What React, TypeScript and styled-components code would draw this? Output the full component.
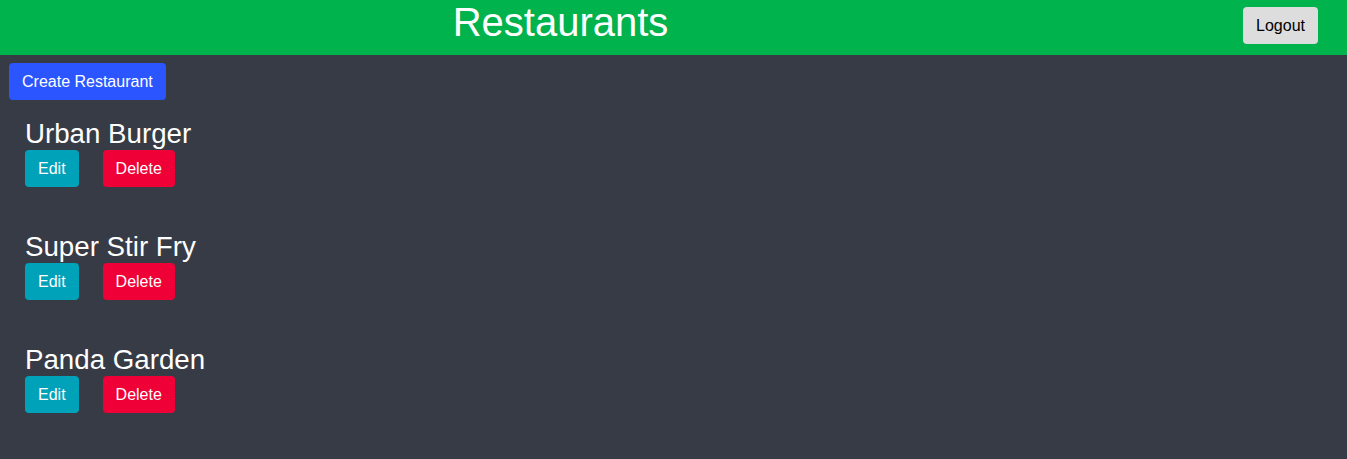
import React from "react";
import styled, { createGlobalStyle } from "styled-components";

const GlobalStyle = createGlobalStyle`
  html, body {
    margin: 0;
    padding: 0;
    background: #373b45;
    font-family: "Liberation Sans", Arial, sans-serif;
  }
  #root {
    min-height: 100vh;
  }
`;

const Page = styled.div`
  min-height: 100vh;
  background: #373b45;
  color: #ffffff;
`;

const Header = styled.header`
  display: flex;
  align-items: flex-start;
  height: 55px;
  background: #00b34c;
`;

const Title = styled.h1`
  flex: 1;
  margin: 0 122px 0 0;
  font-size: 40px;
  line-height: normal;
  font-weight: 400;
  text-align: center;
  color: #ffffff;
`;

const Button = styled.button<{ $bg: string; $fg?: string }>`
  height: 37px;
  padding: 0 13px;
  border: none;
  border-radius: 4px;
  background: ${(p) => p.$bg};
  color: ${(p) => p.$fg ?? "#ffffff"};
  font-family: "Liberation Sans", Arial, sans-serif;
  font-size: 16px;
  line-height: 18px;
  cursor: pointer;
`;

const LogoutButton = styled(Button)`
  margin: 7px 29px 0 0;
`;

const Main = styled.main`
  padding: 8px 9px;
`;

const List = styled.div`
  display: flex;
  flex-direction: column;
  gap: 44px;
  margin-top: 18px;
  padding-left: 16px;
`;

const Item = styled.div`
  display: flex;
  flex-direction: column;
  align-items: flex-start;
`;

const Name = styled.h2`
  margin: 0;
  height: 32px;
  font-size: 27.7px;
  font-weight: 400;
  line-height: 32px;
  color: #ffffff;
`;

const Actions = styled.div`
  display: flex;
  gap: 24px;
`;

const restaurants = ["Urban Burger", "Super Stir Fry", "Panda Garden"];

export default function App() {
  return (
    <Page>
      <GlobalStyle />
      <Header>
        <Title>Restaurants</Title>
        <LogoutButton $bg="#dddddd" $fg="#000000">
          Logout
        </LogoutButton>
      </Header>
      <Main>
        <Button $bg="#2b55ff">Create Restaurant</Button>
        <List>
          {restaurants.map((r) => (
            <Item key={r}>
              <Name>{r}</Name>
              <Actions>
                <Button $bg="#00a2b9">Edit</Button>
                <Button $bg="#ef0036">Delete</Button>
              </Actions>
            </Item>
          ))}
        </List>
      </Main>
    </Page>
  );
}
